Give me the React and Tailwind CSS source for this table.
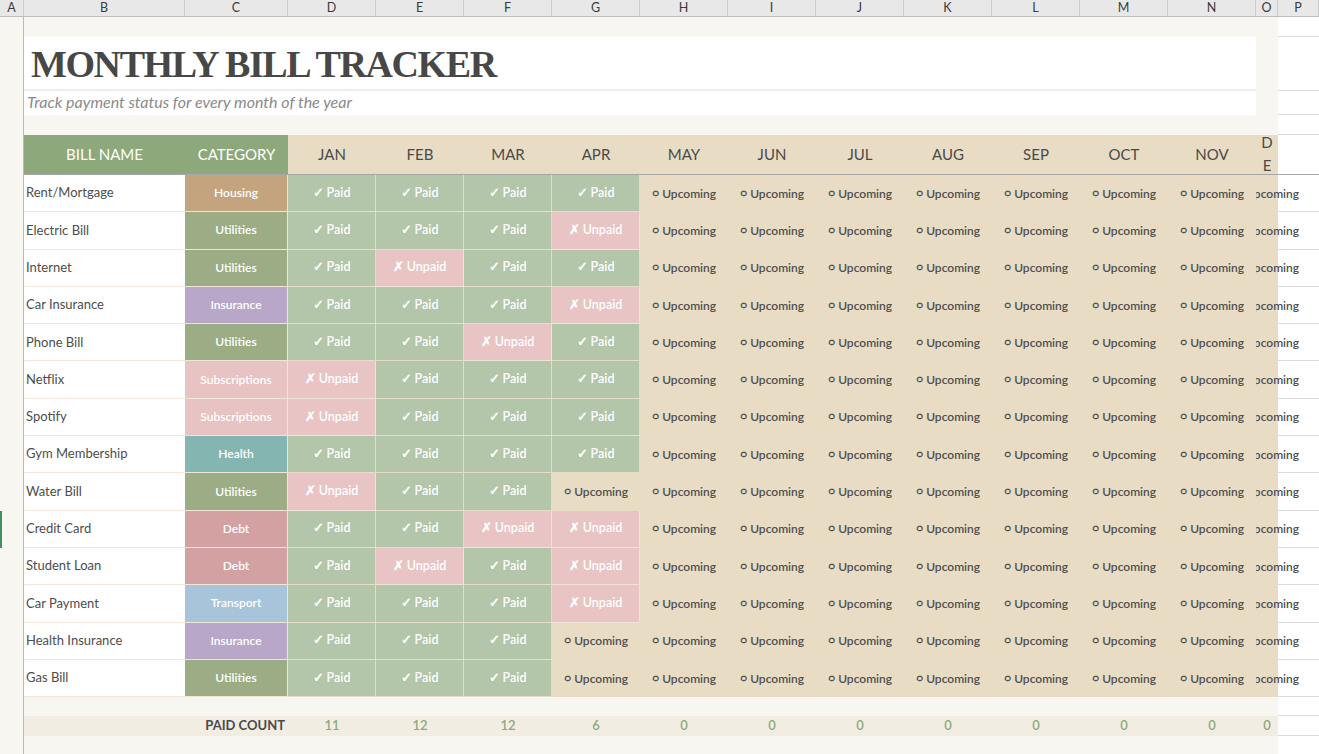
import React from 'react';

const LETTERS = ['A', 'B', 'C', 'D', 'E', 'F', 'G', 'H', 'I', 'J', 'K', 'L', 'M', 'N', 'O', 'P'];
const LETTER_W = ['w-[24px]', 'w-[161px]', 'w-[103px]', 'w-[88px]', 'w-[88px]', 'w-[88px]', 'w-[88px]', 'w-[88px]', 'w-[88px]', 'w-[88px]', 'w-[88px]', 'w-[88px]', 'w-[88px]', 'w-[88px]', 'w-[22px]', 'w-[41px]'];

const MONTHS = ['JAN', 'FEB', 'MAR', 'APR', 'MAY', 'JUN', 'JUL', 'AUG', 'SEP', 'OCT', 'NOV'];

const CATEGORY_BG = {
  Housing: 'bg-[#c4a47e]',
  Utilities: 'bg-[#9cad86]',
  Insurance: 'bg-[#b8a7c8]',
  Subscriptions: 'bg-[#e7c3c3]',
  Health: 'bg-[#85b5b0]',
  Debt: 'bg-[#d3a1a1]',
  Transport: 'bg-[#a8c4da]',
};

// P = paid, U = unpaid, O = upcoming (jan..apr only, rest is upcoming)
const bills = [
  { name: 'Rent/Mortgage', category: 'Housing', status: 'PPPP' },
  { name: 'Electric Bill', category: 'Utilities', status: 'PPPU' },
  { name: 'Internet', category: 'Utilities', status: 'PUPP' },
  { name: 'Car Insurance', category: 'Insurance', status: 'PPPU' },
  { name: 'Phone Bill', category: 'Utilities', status: 'PPUP' },
  { name: 'Netflix', category: 'Subscriptions', status: 'UPPP' },
  { name: 'Spotify', category: 'Subscriptions', status: 'UPPP' },
  { name: 'Gym Membership', category: 'Health', status: 'PPPP' },
  { name: 'Water Bill', category: 'Utilities', status: 'UPPO' },
  { name: 'Credit Card', category: 'Debt', status: 'PPUU' },
  { name: 'Student Loan', category: 'Debt', status: 'PUPU' },
  { name: 'Car Payment', category: 'Transport', status: 'PPPU' },
  { name: 'Health Insurance', category: 'Insurance', status: 'PPPO' },
  { name: 'Gas Bill', category: 'Utilities', status: 'PPPO' },
];

const UpcomingLabel = () => (
  <span className="whitespace-nowrap text-[12px] font-semibold text-[#4f4f4f]">
    <span className="text-[11px] relative top-[-1px] font-bold">○</span> Upcoming
  </span>
);

const StatusCell = ({ s }) => {
  if (s === 'P') {
    return (
      <div className="w-[88px] h-full flex items-center justify-center bg-[#b3c6aa] border-r border-b border-[#e6dcc8] text-white text-[12.5px] font-semibold">
        ✓ Paid
      </div>
    );
  }
  if (s === 'U') {
    return (
      <div className="w-[88px] h-full flex items-center justify-center bg-[#e8c4c4] border-r border-b border-[#efe2d6] text-white text-[12.5px] font-semibold">
        ✗ Unpaid
      </div>
    );
  }
  return (
    <div className="w-[88px] h-full flex items-center justify-center bg-[#e8dcc5]">
      <UpcomingLabel />
    </div>
  );
};

const SideA = ({ marker }) => (
  <div className="w-[24px] h-full shrink-0 bg-[#f8f6f1] border-r border-[#b9b9b9] relative">
    {marker && <div className="absolute left-0 top-0 bottom-0 w-[2px] bg-[#3f8f5f]" />}
  </div>
);

const SideP = () => <div className="w-[41px] h-full shrink-0 bg-white border-b border-[#dcdcdc]" />;

const App = () => {
  return (
    <div className="w-[1319px] h-[754px] overflow-hidden bg-white font-['Lato',sans-serif]">
      {/* Column letters */}
      <div className="flex h-[17px] bg-[#e8e8e8] border-b border-[#bdbdbd]">
        {LETTERS.map((l, i) => (
          <div
            key={l}
            className={`${LETTER_W[i]} shrink-0 flex items-center justify-center border-r border-[#cdcdcd] text-[12.5px] text-[#3a3a3a] leading-none`}
          >
            {l}
          </div>
        ))}
      </div>

      {/* spacer */}
      <div className="flex h-[20px]">
        <SideA />
        <div className="w-[1254px] bg-[#f8f6f1]" />
        <SideP />
      </div>

      {/* Title */}
      <div className="flex h-[54px]">
        <SideA />
        <div className="w-[1232px] bg-white border-b-2 border-[#eeeeee] flex items-center pl-[7px]">
          <h1 className="font-['Liberation_Serif',serif] font-bold text-[38px] tracking-[-1.4px] text-[#474747] leading-none pt-[2px]">
            MONTHLY BILL TRACKER
          </h1>
        </div>
        <div className="w-[22px] bg-[#f8f6f1]" />
        <SideP />
      </div>

      {/* Subtitle */}
      <div className="flex h-[24px]">
        <SideA />
        <div className="w-[1232px] bg-white flex items-center pl-[3px]">
          <p className="italic text-[16px] text-[#8a8a8a] leading-none mt-[-2px]">Track payment status for every month of the year</p>
        </div>
        <div className="w-[22px] bg-[#f8f6f1]" />
        <SideP />
      </div>

      {/* spacer */}
      <div className="flex h-[20px]">
        <SideA />
        <div className="w-[1254px] bg-[#f8f6f1]" />
        <SideP />
      </div>

      {/* Table header */}
      <div className="flex h-[40px]">
        <SideA />
        <div className="flex border-b border-[#a6a6a6]">
          <div className="w-[161px] bg-[#8da87a] flex items-center justify-center text-white text-[15px]">BILL NAME</div>
          <div className="w-[103px] bg-[#8da87a] flex items-center justify-center text-white text-[15px]">CATEGORY</div>
          {MONTHS.map((m) => (
            <div key={m} className="w-[88px] bg-[#e8dcc5] flex items-center justify-center text-[#4a4a4a] text-[15px]">
              {m}
            </div>
          ))}
          <div className="w-[22px] bg-[#e8dcc5] overflow-hidden flex justify-center">
            <div className="w-[12px] break-all text-[15px] leading-[23px] text-[#4a4a4a] mt-[-4px] text-center">DEC</div>
          </div>
          <div className="w-[41px] bg-white" />
        </div>
      </div>

      {/* Rows */}
      {bills.map((b, r) => (
        <div key={b.name} className="flex h-[37.3px]">
          <SideA marker={r === 9} />
          <div className="w-[161px] h-full bg-white border-b border-[#f3e7da] flex items-center pl-[2px] text-[13px] text-[#4d4d4d]">
            {b.name}
          </div>
          <div className={`w-[103px] h-full ${CATEGORY_BG[b.category]} border-r border-b border-[#efe6d8] flex items-center justify-center text-white text-[12px] font-semibold`}>
            {b.category}
          </div>
          {b.status.split('').map((s, i) => (
            <StatusCell key={i} s={s} />
          ))}
          {MONTHS.slice(4).map((m) => (
            <StatusCell key={m} s="O" />
          ))}
          <div className="w-[22px] h-full bg-[#e8dcc5] relative">
            <div className="absolute left-0 top-0 bottom-0 w-[63px] overflow-hidden">
              <div className="absolute left-[11px] top-0 bottom-0 -translate-x-1/2 flex items-center">
                <UpcomingLabel />
              </div>
            </div>
          </div>
          <SideP />
        </div>
      ))}

      {/* spacer */}
      <div className="flex h-[19px]">
        <SideA />
        <div className="w-[1254px] bg-[#f8f6f1]" />
        <SideP />
      </div>

      {/* Paid count */}
      <div className="flex h-[20px]">
        <SideA />
        <div className="w-[161px] bg-[#f2ede3]" />
        <div className="w-[103px] bg-[#f2ede3] flex items-center justify-end pr-[3px] text-[13px] font-bold text-[#4a4a4a]">
          PAID COUNT
        </div>
        {[11, 12, 12, 6, 0, 0, 0, 0, 0, 0, 0].map((n, i) => (
          <div key={i} className="w-[88px] bg-[#f2ede3] flex items-center justify-center text-[13px] font-semibold text-[#8da87a]">
            {n}
          </div>
        ))}
        <div className="w-[22px] bg-[#f2ede3] flex items-center justify-center text-[13px] font-semibold text-[#8da87a]">0</div>
        <SideP />
      </div>

      {/* bottom */}
      <div className="flex h-[30px]">
        <SideA />
        <div className="w-[1254px] bg-[#f8f6f1]" />
        <SideP />
      </div>
    </div>
  );
};

export default App;
